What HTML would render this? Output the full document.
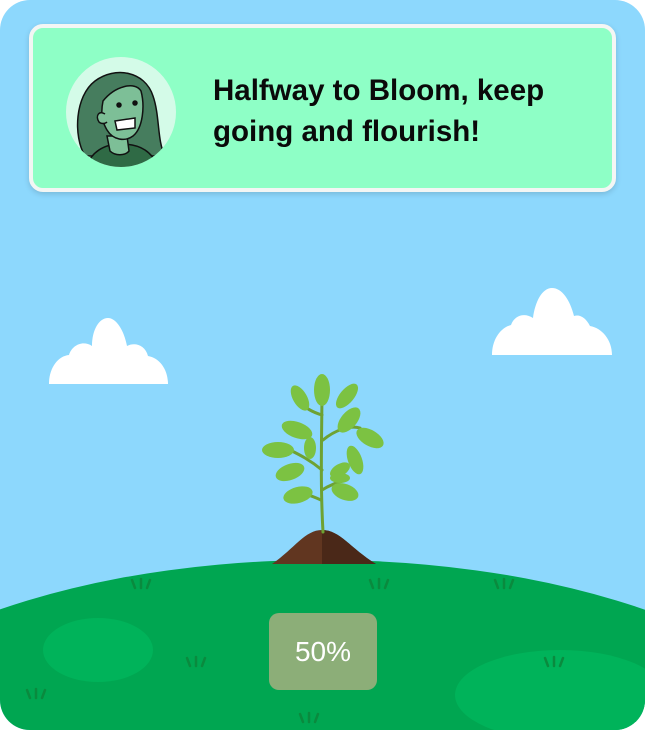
<!DOCTYPE html>
<html><head><style>
html,body{margin:0;padding:0;background:#fff;width:645px;height:730px;overflow:hidden}
.wrap{position:absolute;left:0;top:0;width:645px;height:730px;border-radius:30px;overflow:hidden;background:#8dd8fd}
.card{position:absolute;box-sizing:border-box;left:29px;top:24px;width:587px;height:168px;background:#8effc6;border:4px solid #f3f6f4;border-radius:14px;box-shadow:0 2px 6px rgba(0,0,0,.15)}
.txt{position:absolute;left:213px;top:70px;font:bold 29.5px/41px "Liberation Sans",sans-serif;color:#0a0a0a;width:390px}
.pct{position:absolute;left:269px;top:613px;width:108px;height:77px;background:#8cae78;border-radius:10px;color:#fff;font:28px/77px "Liberation Sans",sans-serif;text-align:center}
</style></head><body>
<div class="wrap">
<svg width="645" height="730" style="position:absolute;left:0;top:0">
<g fill="#fff">
<path d="M49 384 L168 384 C168 370 160 358 148 356 C145 345 135 342 127 346 C124 330 116 318 108 318 C99 318 92 330 92 346 C83 340 72 345 69 355 C58 356 49 368 49 384Z"/>
<path d="M492 355 L612 355 C612 340 602 328 590 326 C586 318 580 314 574 316 C570 300 562 288 552 288 C542 288 535 302 533 318 C524 312 514 316 511 325 C500 328 492 340 492 355Z"/>
</g>
<ellipse cx="322" cy="800" rx="530" ry="240" fill="#00a651"/>
<ellipse cx="98" cy="650" rx="55" ry="32" fill="#00b35a"/>
<ellipse cx="560" cy="695" rx="105" ry="45" fill="#00b35a"/>
<path d="M272 564 C295 548 305 530 322 530 C340 530 350 548 376 564Z" fill="#613620"/>
<path d="M322 530 C340 530 350 548 376 564 L322 564Z" fill="#4a2818"/>
<g stroke="#6ea232" stroke-width="3" fill="none" stroke-linecap="round">
<path d="M323 532 C320 480 322 430 322 385"/>
<path d="M322 470 C310 460 300 455 290 450"/>
<path d="M323 440 C335 430 350 425 360 428"/>
<path d="M322 490 C330 485 338 482 346 480"/>
<path d="M321 500 C310 495 300 492 292 492"/>
<path d="M322 415 C312 412 305 408 300 402"/>
</g>
<g fill="#7cc242">
<ellipse cx="322" cy="390" rx="8" ry="16"/>
<ellipse cx="300" cy="398" rx="7" ry="14" transform="rotate(-30 300 398)"/>
<ellipse cx="347" cy="396" rx="7" ry="15" transform="rotate(40 347 396)"/>
<ellipse cx="297" cy="430" rx="16" ry="8" transform="rotate(20 297 430)"/>
<ellipse cx="349" cy="420" rx="8" ry="15" transform="rotate(40 349 420)"/>
<ellipse cx="370" cy="438" rx="15" ry="8" transform="rotate(30 370 438)"/>
<ellipse cx="278" cy="450" rx="16" ry="8"/>
<ellipse cx="310" cy="448" rx="6" ry="11"/>
<ellipse cx="355" cy="460" rx="7" ry="15" transform="rotate(-20 355 460)"/>
<ellipse cx="290" cy="472" rx="15" ry="8" transform="rotate(-20 290 472)"/>
<ellipse cx="340" cy="470" rx="11" ry="6" transform="rotate(-30 340 470)"/>
<ellipse cx="298" cy="495" rx="15" ry="8" transform="rotate(-15 298 495)"/>
<ellipse cx="345" cy="492" rx="14" ry="8" transform="rotate(20 345 492)"/>
<ellipse cx="340" cy="478" rx="10" ry="5"/>
</g>
<g stroke="#0a8a3e" stroke-width="2.5" stroke-linecap="round">
<path d="M135 588l-3-8M141 588v-9M147 588l3-8"/>
<path d="M373 588l-3-8M379 588v-9M385 588l3-8"/>
<path d="M498 588l-3-8M504 588v-9M510 588l3-8"/>
<path d="M190 666l-3-8M196 666v-9M202 666l3-8"/>
<path d="M548 666l-3-8M554 666v-9M560 666l3-8"/>
<path d="M30 698l-3-8M36 698v-9M42 698l3-8"/>
<path d="M303 722l-3-8M309 722v-9M315 722l3-8"/>
</g>
</svg>
<div class="card"></div>
<svg width="112" height="112" style="position:absolute;left:65px;top:56px" viewBox="0 0 112 112">
<circle cx="56" cy="56" r="55" fill="#d4fbe8"/>
<clipPath id="c"><circle cx="56" cy="56" r="55"/></clipPath>
<g clip-path="url(#c)" stroke="#111" stroke-width="1.5">
<path d="M20 100 C8 80 10 40 30 25 C50 10 80 15 88 40 C95 60 92 85 100 100 Z" fill="#467d5e"/>
<path d="M20 115 C25 95 40 88 56 88 C75 88 88 95 95 115Z" fill="#2f6a45"/>
<path d="M42 80 L45 95 C50 100 60 100 64 95 L62 80Z" fill="#7dbf97"/>
<path d="M38 45 C50 30 70 25 76 35 C80 50 78 72 68 80 C60 86 48 84 42 74 C36 64 36 55 38 45Z" fill="#7dbf97"/>
<path d="M40 58 C34 54 30 60 34 66 C36 68 40 68 42 66" fill="#7dbf97"/>
<path d="M50 65 L70 62 L70 72 L52 74Z" fill="#fff"/>
<circle cx="54" cy="49" r="2" fill="#111"/><circle cx="70" cy="47" r="2" fill="#111"/>
</g>
</svg>
<div class="txt">Halfway to Bloom, keep going and flourish!</div>
<div class="pct">50%</div>
</div>
</body></html>
